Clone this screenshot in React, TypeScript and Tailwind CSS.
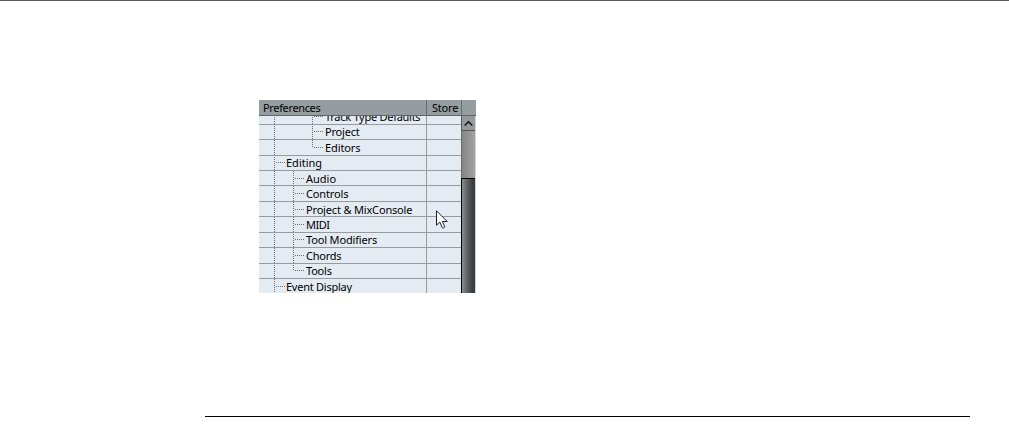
import React from "react";
import clsx from "clsx";

type Guide = "none" | "pass" | "end";

type IRow = {
  label: string;
  guides: Guide[];
  layout: string;
  spacing: string;
};

// The last guide of a row is the one that branches off to its label
const rows: IRow[] = [
  { label: "Track Type Defaults", guides: ["pass", "none", "pass"], layout: "h-[9px] items-end", spacing: "tracking-[-0.27px]" },
  { label: "Project", guides: ["pass", "none", "pass"], layout: "h-[15px] items-end", spacing: "tracking-[-0.2px]" },
  { label: "Editors", guides: ["pass", "none", "end"], layout: "h-[16px] items-end", spacing: "tracking-[-0.1px]" },
  { label: "Editing", guides: ["pass"], layout: "h-[15px] items-end", spacing: "tracking-normal" },
  { label: "Audio", guides: ["pass", "pass"], layout: "h-[15px] items-start", spacing: "tracking-normal" },
  { label: "Controls", guides: ["pass", "pass"], layout: "h-[16px] items-end", spacing: "tracking-[-0.15px]" },
  { label: "Project & MixConsole", guides: ["pass", "pass"], layout: "h-[15px] items-start", spacing: "tracking-[-0.17px]" },
  { label: "MIDI", guides: ["pass", "pass"], layout: "h-[16px] items-end", spacing: "tracking-[-0.5px]" },
  { label: "Tool Modifiers", guides: ["pass", "pass"], layout: "h-[15px] items-end", spacing: "tracking-[-0.15px]" },
  { label: "Chords", guides: ["pass", "pass"], layout: "h-[16px] items-end", spacing: "tracking-[-0.25px]" },
  { label: "Tools", guides: ["pass", "end"], layout: "h-[15px] items-end", spacing: "tracking-[-0.2px]" },
  { label: "Event Display", guides: ["pass"], layout: "h-[15px] items-start", spacing: "tracking-[-0.25px]" },
];

function TreeGuide({ guide, branch }: { guide: Guide; branch: boolean }) {
  return (
    <div className={clsx("flex shrink-0", branch ? "w-[12px]" : "w-[19px]")}>
      <div
        className={clsx(
          "w-px shrink-0",
          guide !== "none" && "bg-[repeating-linear-gradient(to_bottom,#6b6e72_0_1px,transparent_1px_2px)]",
          guide === "end" ? "h-[8px]" : "h-full"
        )}
      />
      {branch && (
        <div className="mt-[7px] ml-px h-px w-[10px] bg-[repeating-linear-gradient(to_right,#6b6e72_0_1px,transparent_1px_2px)]" />
      )}
    </div>
  );
}

function PreferenceRow({ row }: { row: IRow }) {
  const { label, guides, layout, spacing } = row;

  return (
    <li className={clsx("flex shrink-0 overflow-hidden border-b border-[#989a9c]", layout)}>
      <div className="flex h-[15px] w-[167px] shrink-0 pl-[15px]">
        {guides.map((guide, i) => (
          <TreeGuide key={i} guide={guide} branch={i === guides.length - 1} />
        ))}
        <span className={clsx("leading-[15px] whitespace-nowrap", guides.length > 1 && "pl-px", spacing)}>
          {label}
        </span>
      </div>
      <div className="h-[15px] w-[35px] self-stretch border-l border-[#989a9c]" />
    </li>
  );
}

function Scrollbar() {
  return (
    <div className="flex w-[15px] shrink-0 flex-col border-r border-[#d4d6d8]">
      <div className="flex h-[15px] shrink-0 items-center justify-center border-b border-l border-[#565859] bg-[#96999b]">
        <svg width="9" height="6" viewBox="0 0 9 6" fill="none" stroke="#111" strokeWidth="1.4">
          <path d="M0.7 5.5 4.5 1.7 8.3 5.5" />
        </svg>
      </div>
      <div className="h-[47px] shrink-0 border-l border-[#6c6c6c] bg-[linear-gradient(to_right,#858585,#a2a2a2)]" />
      <div className="flex-1 border-t border-l border-black bg-[linear-gradient(to_right,#8b8d8f,#63676a_35%,#3e4347_75%,#34393d)]" />
    </div>
  );
}

export default function App() {
  return (
    <div className="flex h-[425px] w-[1009px] flex-col overflow-hidden border-t border-[#595959] bg-white">
      <div className="relative mt-[99px] ml-[259px] h-[193px] w-[217px] shrink-0 overflow-hidden font-['Noto_Sans',sans-serif] text-[11px] text-black">
        <div className="flex h-[16px] border-b border-[#5f6468] bg-[#969da1] leading-[16px]">
          <span className="w-[167px] pl-[4px] tracking-[-0.35px]">Preferences</span>
          <span className="w-[35px] border-l border-[#666b6e] pl-[5px] tracking-[-0.2px]">Store</span>
          <span className="border-l border-[#666b6e]" />
        </div>
        <div className="flex h-[177px]">
          <ul className="flex w-[202px] shrink-0 flex-col overflow-hidden bg-[#e4ebf3]">
            {rows.map(row => (
              <PreferenceRow key={row.label} row={row} />
            ))}
          </ul>
          <Scrollbar />
        </div>
        <svg className="absolute top-[110px] left-[177px]" width="13" height="20" viewBox="0 0 13 20">
          <path
            d="M0.5 0.8V15.2L3.8 12.1 6.3 17.7Q7.6 18.4 8.8 16.9L6.4 11.5H11.2Z"
            fill="#fff"
            stroke="#1b1b2b"
          />
        </svg>
      </div>
      <div className="mt-[123px] ml-[205px] h-px w-[765px] shrink-0 bg-black" />
    </div>
  );
}
